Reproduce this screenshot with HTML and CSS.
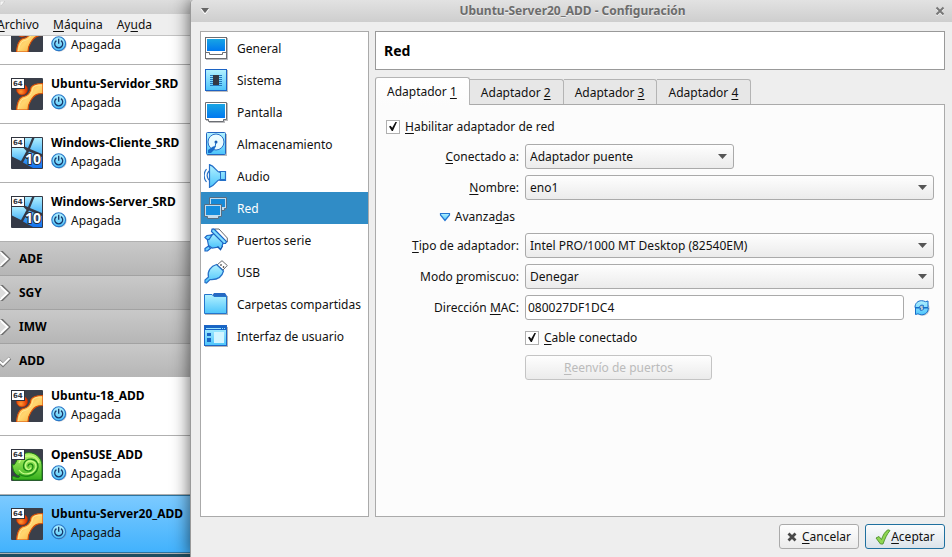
FILE: index.html
```html
<!DOCTYPE html>
<html lang="es">
<head>
<meta charset="utf-8">
<title>Ubuntu-Server20_ADD - Configuración</title>
<link rel="stylesheet" href="styles.css">
</head>
<body>
<svg class="defs" aria-hidden="true">
  <defs>
    <linearGradient id="screen" x1="0" y1="0" x2="0" y2="1"><stop offset="0" stop-color="#18a5e4"/><stop offset="1" stop-color="#0078f0"/></linearGradient>
    <linearGradient id="sky" x1="0" y1="0" x2="0" y2="1"><stop offset="0" stop-color="#b4f2ff"/><stop offset="1" stop-color="#4cc4fb"/></linearGradient>
    <linearGradient id="amber" x1="0" y1="0" x2="1" y2="1"><stop offset="0" stop-color="#ffa024"/><stop offset=".5" stop-color="#ffd670"/><stop offset="1" stop-color="#f9981c"/></linearGradient>
    <radialGradient id="ember" cx=".4" cy=".7"><stop offset="0" stop-color="#ff9a30"/><stop offset="1" stop-color="#e33c05"/></radialGradient>
    <linearGradient id="pane" x1="0" y1="0" x2="0" y2="1"><stop offset="0" stop-color="#aeeeff"/><stop offset="1" stop-color="#4bb4f8"/></linearGradient>
    <linearGradient id="deep" x1="0" y1="0" x2="0" y2="1"><stop offset="0" stop-color="#5cb9fa"/><stop offset="1" stop-color="#1271ee"/></linearGradient>
    <linearGradient id="leaf" x1="0" y1="0" x2="0" y2="1"><stop offset="0" stop-color="#b6f56a"/><stop offset="1" stop-color="#35b01c"/></linearGradient>
  </defs>
  <symbol id="i-badge" viewBox="0 0 32 32">
    <rect x="0.5" y="0.5" width="13" height="10" fill="#fff" stroke="#30343d"/>
    <text class="bits" x="2" y="8">64</text>
  </symbol>
  <symbol id="i-ubuntu-art" viewBox="0 0 32 32">
    <rect width="32" height="32" rx="1" fill="#3a3f4a"/>
    <circle cx="11" cy="11.500" r="5.500" fill="url(#ember)" stroke="#b52e04" stroke-width=".7"/>
    <path d="M32 5.500C27 5.500 22 6 20 9.500C19.500 15 17 18 11 19C7 21 6 26 5.500 32H17C17 28 18 25 20 22C23 17 26 15.500 32 15.500Z" fill="url(#amber)" stroke="#d84c08" stroke-width="1.200"/>
    <path d="M31 7C26 7 23 8 22 10C21 16 18 20 12 21C9 23 8 27 7.500 31" fill="none" stroke="#ffe695" stroke-width="1"/>
  </symbol>
  <symbol id="i-ubuntu" viewBox="0 0 32 32">
    <use href="#i-ubuntu-art"/>
    <use href="#i-badge"/>
  </symbol>
  <symbol id="i-windows" viewBox="0 0 32 32">
    <rect width="32" height="32" rx="1" fill="#343946"/>
    <path d="M12 1H21L17 11L12 9Z" fill="url(#pane)"/>
    <path d="M23.500 1H31V17L19 12Z" fill="url(#pane)"/>
    <path d="M1 10.500H12L15.500 14L10 24L1 19.500Z" fill="url(#pane)"/>
    <path d="M18 14.500L31 20V31H22L12 25.500Z" fill="url(#deep)"/>
    <text class="ten" x="14" y="27">10</text>
    <use href="#i-badge"/>
  </symbol>
  <symbol id="i-suse" viewBox="0 0 32 32">
    <rect width="32" height="32" rx="1" fill="#3a3f4a"/>
    <path d="M1 15C5 19 4 9 12 5C21 1 31 7 31 17V31H2C1 29 1 28 2 27C7 29 8 29 9 27C3 26 2 21 1 15Z" fill="url(#leaf)" stroke="#187d12"/>
    <path d="M8 25C13 29 25 28 27 18C28 9 14 7 12.500 16C12 23 21 24 22 18C22 14 17 14 17 17.500" fill="none" stroke="#1b8914" stroke-width="1.300"/>
    <path d="M8 21C12 27 23 26 25 18C25 11 16 10 14.500 16C14 21 19 22 20 18.500M8 14C11 5 25 4 28 14" fill="none" stroke="#c4fb86" stroke-width="1.300"/>
    <use href="#i-badge"/>
  </symbol>
  <symbol id="i-power" viewBox="0 0 16 16">
    <circle cx="8.500" cy="8.500" r="7.200" fill="#8d9aa5" opacity=".5"/>
    <circle cx="7.700" cy="7.700" r="6.900" fill="url(#sky)" stroke="#2877c8" stroke-width="1.100"/>
    <path d="M5.400 4.600A4 4 0 1 0 10 4.600M7.700 2.800V7.800" fill="none" stroke="#17366a" stroke-width="1.300"/>
  </symbol>
  <symbol id="i-general" viewBox="0 0 24 24">
    <path d="M2 2H24V24H2Z" fill="#bdbdbf"/><rect x="1.500" y="1.500" width="21" height="21" fill="#fff" stroke="#6b6e73"/>
    <rect x="3" y="3" width="18" height="12" fill="url(#screen)"/><path d="M1.500 16.500H5.500V18.500H18.500V16.500H22.500" fill="none" stroke="#6b6e73"/>
  </symbol>
  <symbol id="i-system" viewBox="0 0 24 24">
    <path d="M2 2H24V24H2Z" fill="#bdbdbf"/><rect x="1.500" y="1.500" width="21" height="21" fill="url(#sky)" stroke="#1c63c4"/>
    <path d="M6 7.500H18M6 9.500H18M6 11.500H18M6 13.500H18M6 15.500H18M6 17.500H18" stroke="#2477be"/><rect x="9" y="7" width="6" height="10" fill="#343944"/>
  </symbol>
  <symbol id="i-display" viewBox="0 0 24 24">
    <path d="M2 3H24V21H21V23H5V21H2Z" fill="#bdbdbf"/><path d="M1.500 2.500H22.500V19.500H19.500V21.500H4.500V19.500H1.500Z" fill="#fff" stroke="#6b6e73"/>
    <rect x="3" y="4" width="18" height="14" fill="url(#screen)"/>
  </symbol>
  <symbol id="i-storage" viewBox="0 0 24 24">
    <path d="M3 2H23V24H3Z" fill="#bdbdbf"/><rect x="2.500" y=".5" width="19" height="22" rx="1" fill="url(#sky)" stroke="#2365c0"/>
    <circle cx="12" cy="10" r="8" fill="#e9fbff" stroke="#2871c8"/><circle cx="12" cy="10" r="1.500" fill="#1559ad"/>
    <path d="M4 21V18L9 14.500L12 14L10 18L7 21Z" fill="#176bc8"/><path d="M12 10L11 15" stroke="#176bc8"/>
  </symbol>
  <symbol id="i-audio" viewBox="0 0 24 24">
    <path d="M2.500 5C-.5 9-.5 14 2.500 18M5 7C2.500 10 2.500 13 5 16" fill="none" stroke="#2a72c4" stroke-width="1.200"/>
    <path d="M5.500 .7C11 2 12 8 16 8.500V7.500H21.500V16.500H16V15.500C12 16 11 22 5.500 23.300Z" fill="url(#sky)" stroke="#2470c8" stroke-width="1.200"/><path d="M16.500 8V16M17 15.500H21" stroke="#2470c8"/>
  </symbol>
  <symbol id="i-network" viewBox="0 0 24 24">
    <path d="M5.500 1.500H22.500V12.500H20.500V14.500H8.500V12.500H5.500Z" fill="#c3dced" stroke="#566e83"/><rect x="7" y="3" width="14" height="8" fill="#178ad8"/>
    <path d="M.5 8.500H17.500V20.500H14.500V22.500H3.500V20.500H.5Z" fill="#c3dced" stroke="#566e83"/><rect x="2" y="10" width="14" height="9" fill="#168ddd"/>
  </symbol>
  <symbol id="i-serial" viewBox="0 0 24 24">
    <path d="M11 1H15L23.300 10V14H20L10 4Z" fill="#fff" stroke="#686a6e"/>
    <path d="M3 9.500L12 4.500L19.500 13.500L18 18.500L8 20L4.500 17.500Z" fill="url(#sky)" stroke="#1c65c5" stroke-width="1.200"/>
    <path d="M8 1.200L10 1L22.500 13.500L21.500 15.500L19.500 15.500L7.500 3.500Z" fill="#7fdcff" stroke="#1c65c5" stroke-width="1.200"/>
    <path d="M1 9.500L3 7.500L8 7L5 11.500L2.500 11ZM1 20.500L4.500 18L6.500 20.500L3.500 23H1Z" fill="#6ed2ff" stroke="#1c65c5" stroke-width="1.200"/>
    <path d="M13.500 18.500L16.500 21.500L18.500 18" fill="#7fdcff" stroke="#1559b2" stroke-width="1.500"/>
  </symbol>
  <symbol id="i-usb" viewBox="0 0 24 24">
    <path d="M13 5L18 .7L23.300 5.500L19 10Z" fill="#fff" stroke="#6b6d70"/><path d="M16.500 4.500L17.500 5.500M19 6.500L20 7.500" stroke="#333" stroke-width="1.500"/>
    <path d="M12.500 4.500L19.500 11C18 17 13 20 6 19.500L2.500 23L1 22.500V20L4.500 17C3 11 7 6 12.500 4.500Z" fill="url(#sky)" stroke="#2670c8" stroke-width="1.200"/>
  </symbol>
  <symbol id="i-folder" viewBox="0 0 24 24">
    <path d="M1 4H24V23H1Z" fill="#b4b5b8"/><path d="M8 4L10 1H21L23 4V6H8Z" fill="#2669c2"/><path d="M.5 2.500H8L10 4.500H22.500V21.500H.5Z" fill="url(#sky)" stroke="#2475cc"/>
  </symbol>
  <symbol id="i-interface" viewBox="0 0 24 24">
    <path d="M1 3H24V23H1Z" fill="#b4b5b8"/><rect x=".5" y="1.500" width="22" height="20" fill="url(#sky)" stroke="#1d66c5"/>
    <path d="M1 2H22V6H1ZM3 9H7V12H3ZM3 14H7V18H3Z" fill="#1765c5"/><path d="M2 4.500H17M18 4.500H19M20 4.500H21" stroke="#9be4ff"/><rect x="10" y="8" width="10" height="11" fill="#d3f5ff"/>
  </symbol>
  <symbol id="i-refresh" viewBox="0 0 16 16">
    <circle cx="8.700" cy="8.700" r="7" fill="#9aa5b0" opacity=".6"/>
    <path d="M1 7.500C1 3 4 .7 7.500 .7C9 .7 10.500 1.200 11.500 1.700L14 1V7.500H9L9.500 5.500C7.500 4.500 5.500 5.500 5.500 7.500ZM14.300 8C14.300 12.500 11 14.800 7.700 14.800C6 14.800 5 14.300 4 13.800L1.500 14.500V8H6.500L6 10C8 11 9.500 10 9.800 8Z" fill="url(#sky)" stroke="#176dc9"/>
  </symbol>
</svg>

<div class="desktop">
  <aside class="manager">
    <div class="manager-title"><svg width="5" height="5" viewBox="0 0 5 5" aria-hidden="true"><path d="M0 0H5L1 5H0Z" fill="#f5f5f5" stroke="#b5b5b5" stroke-width=".5"/></svg></div>
    <nav class="menubar">
      <button type="button"><u>A</u>rchivo</button><button type="button"><u>M</u>áquina</button><button type="button">Ay<u>u</u>da</button>
    </nav>
    <div class="machines">
      <div class="machine clipped"><svg class="os" viewBox="0 16 32 16"><use href="#i-ubuntu-art" width="32" height="32"/></svg><span class="state"><svg><use href="#i-power"/></svg>Apagada</span></div>
      <div class="machine"><svg class="os"><use href="#i-ubuntu"/></svg><div><strong>Ubuntu-Servidor_SRD</strong><span class="state"><svg><use href="#i-power"/></svg>Apagada</span></div></div>
      <div class="machine"><svg class="os"><use href="#i-windows"/></svg><div><strong>Windows-Cliente_SRD</strong><span class="state"><svg><use href="#i-power"/></svg>Apagada</span></div></div>
      <div class="machine"><svg class="os"><use href="#i-windows"/></svg><div><strong>Windows-Server_SRD</strong><span class="state"><svg><use href="#i-power"/></svg>Apagada</span></div></div>
      <button type="button" class="group"><svg viewBox="0 0 12 16"><path d="M0 1H2L9 8L2 15H0Z" fill="#ddd"/><path d="M0 2L2 1L9 8L2 15L0 14" fill="none" stroke="#707070" stroke-width="2.500"/><path d="M0 1L7.500 8L0 15" fill="none" stroke="#fff" stroke-width="2"/></svg>ADE</button>
      <button type="button" class="group"><svg viewBox="0 0 12 16"><path d="M0 1H2L9 8L2 15H0Z" fill="#ddd"/><path d="M0 2L2 1L9 8L2 15L0 14" fill="none" stroke="#707070" stroke-width="2.500"/><path d="M0 1L7.500 8L0 15" fill="none" stroke="#fff" stroke-width="2"/></svg>SGY</button>
      <button type="button" class="group"><svg viewBox="0 0 12 16"><path d="M0 1H2L9 8L2 15H0Z" fill="#ddd"/><path d="M0 2L2 1L9 8L2 15L0 14" fill="none" stroke="#707070" stroke-width="2.500"/><path d="M0 1L7.500 8L0 15" fill="none" stroke="#fff" stroke-width="2"/></svg>IMW</button>
      <button type="button" class="group open"><svg viewBox="0 0 12 16"><path d="M-1 8L3 12L10 5" fill="none" stroke="#777" stroke-width="3.500"/><path d="M-1 8L3 11.500L9.500 5" fill="none" stroke="#fff" stroke-width="2.200"/></svg>ADD</button>
      <div class="machine"><svg class="os"><use href="#i-ubuntu"/></svg><div><strong>Ubuntu-18_ADD</strong><span class="state"><svg><use href="#i-power"/></svg>Apagada</span></div></div>
      <div class="machine"><svg class="os"><use href="#i-suse"/></svg><div><strong>OpenSUSE_ADD</strong><span class="state"><svg><use href="#i-power"/></svg>Apagada</span></div></div>
      <div class="machine selected"><svg class="os"><use href="#i-ubuntu"/></svg><div><strong>Ubuntu-Server20_ADD</strong><span class="state"><svg><use href="#i-power"/></svg>Apagada</span></div></div>
    </div>
  </aside>

  <section class="dialog">
    <header class="titlebar">
      <button type="button" aria-label="Menú de ventana"><svg width="10" height="6" viewBox="0 0 10 6"><path d="M1 1L5 6L9 1" fill="none" stroke="#fff"/><path d="M1 0H9L5 5Z" fill="#666"/></svg></button>
      <h1>Ubuntu-Server20_ADD - Configuración</h1>
      <button type="button" aria-label="Cerrar"><svg width="10" height="10" viewBox="0 0 10 10"><path d="M1.500 2.500L8.500 9.500M8.500 2.500L1.500 9.500" stroke="#f4f4f4" stroke-width="2"/><path d="M1.500 1.500L8.500 8.500M8.500 1.500L1.500 8.500" stroke="#777" stroke-width="2"/></svg></button>
    </header>
    <div class="content">
      <nav class="pages">
        <button type="button"><svg><use href="#i-general"/></svg><span>General</span></button>
        <button type="button"><svg><use href="#i-system"/></svg><span>Sistema</span></button>
        <button type="button"><svg><use href="#i-display"/></svg><span>Pantalla</span></button>
        <button type="button"><svg><use href="#i-storage"/></svg><span>Almacenamiento</span></button>
        <button type="button"><svg><use href="#i-audio"/></svg><span>Audio</span></button>
        <button type="button" class="current"><svg><use href="#i-network"/></svg><span>Red</span></button>
        <button type="button"><svg><use href="#i-serial"/></svg><span>Puertos serie</span></button>
        <button type="button"><svg><use href="#i-usb"/></svg><span>USB</span></button>
        <button type="button"><svg><use href="#i-folder"/></svg><span>Carpetas compartidas</span></button>
        <button type="button"><svg><use href="#i-interface"/></svg><span>Interfaz de usuario</span></button>
      </nav>
      <main>
        <h2>Red</h2>
        <div class="tabs" role="tablist">
          <button type="button" role="tab" class="active" aria-selected="true">Adaptador <u>1</u></button><button type="button" role="tab">Adaptador <u>2</u></button><button type="button" role="tab">Adaptador <u>3</u></button><button type="button" role="tab">Adaptador <u>4</u></button>
        </div>
        <form class="panel">
          <div class="check wide"><input type="checkbox" id="enable" checked><label for="enable"><u>H</u>abilitar adaptador de red</label></div>

          <label for="attached"><u>C</u>onectado a:</label>
          <div class="select short"><select id="attached"><option>Adaptador puente</option></select></div>

          <label for="name"><u>N</u>ombre:</label>
          <div class="select"><select id="name"><option>eno1</option></select></div>

          <button type="button" class="advanced"><svg width="12" height="10" viewBox="0 0 12 10"><path d="M1.500 1.500H10.500V3L6 8.500L1.500 3Z" fill="url(#sky)" stroke="#2476d2" stroke-width="1.200"/></svg><span>Avanza<u>d</u>as</span></button>

          <label for="type"><u>T</u>ipo de adaptador:</label>
          <div class="select"><select id="type"><option>Intel PRO/1000 MT Desktop (82540EM)</option></select></div>

          <label for="promiscuous">Modo <u>p</u>romiscuo:</label>
          <div class="select"><select id="promiscuous"><option>Denegar</option></select></div>

          <label for="mac">Dirección <u>M</u>AC:</label>
          <div class="mac"><input type="text" id="mac" value="080027DF1DC4"><button type="button" aria-label="Generar dirección MAC"><svg width="16" height="16"><use href="#i-refresh"/></svg></button></div>

          <div class="check second"><input type="checkbox" id="cable" checked><label for="cable"><u>C</u>able conectado</label></div>
          <button type="button" class="button forward second" disabled><span><u>R</u>eenvío de puertos</span></button>
        </form>
      </main>
    </div>
    <footer>
      <button type="button" class="button"><svg width="10" height="10" viewBox="0 0 10 10"><path d="M1.500 1.500L8.500 8.500M8.500 1.500L1.500 8.500" stroke="#484848" stroke-width="2.800"/></svg><span><u>C</u>ancelar</span></button>
      <button type="button" class="button primary"><svg width="16" height="16" viewBox="0 0 16 16"><path d="M1 9L4 7.500L6.500 10.500C8 6 10 2.500 13 .8L15 1.500C12 5 10 9.500 8 15H5.500Z" fill="#8ed652" stroke="#4c8e2d" stroke-width=".9"/></svg><span><u>A</u>ceptar</span></button>
    </footer>
  </section>
</div>
</body>
</html>
```
FILE: styles.css
```css
* { box-sizing: border-box; }

body {
  margin: 0;
  background: #eee;
  color: #111;
  font: 12px/18px "Noto Sans", sans-serif;
}

button, input, select {
  margin: 0;
  padding: 0;
  border: 0;
  background: none;
  color: inherit;
  font: inherit;
}

svg { display: block; flex: none; }
u { text-underline-offset: 2px; text-decoration-thickness: 1px; text-decoration-skip-ink: none; }

.defs { position: absolute; width: 0; height: 0; }
.bits { font: bold 7px "DejaVu Sans", sans-serif; fill: #30343d; }
.ten { font: bold 14px "Noto Sans", sans-serif; fill: #fff; stroke: #262b38; stroke-width: 2px; paint-order: stroke; }

.desktop { display: flex; min-height: 100vh; }

/* Machine manager window, behind the dialog */
.manager {
  width: 190px;
  flex: none;
  overflow: hidden;
  background: #1f4d60;
}
.manager-title {
  height: 14px;
  padding-top: 1px;
  background: linear-gradient(#dedede, #cfcfcf);
}
.menubar {
  display: flex;
  gap: 14px;
  height: 22px;
  margin-left: -3px;
  background: #eee;
  border-bottom: 1px solid #c4c4c4;
}
.machines { background: #fff; border-bottom: 1px solid #b0b0b0; }
.machine {
  display: flex;
  align-items: center;
  gap: 8px;
  height: 59px;
  padding-left: 11px;
  border-bottom: 1px solid #b0b0b0;
  white-space: nowrap;
}
.machine strong { display: block; color: #000; }
.os { width: 32px; height: 32px; }
.state { display: flex; align-items: center; gap: 4px; line-height: 20px; }
.state svg { width: 16px; height: 16px; margin-bottom: 2px; }
.machine.clipped { height: 29px; align-items: flex-start; }
.clipped .os { height: 16px; }
.clipped .state { line-height: 18px; }
.machine.selected {
  height: 58px;
  background: linear-gradient(#7ccaff, #42b2fd);
  border-top: 1px solid #2b739f;
  border-bottom-color: #2b739f;
}
.group {
  display: flex;
  align-items: center;
  gap: 7px;
  width: 100%;
  height: 34px;
  background: linear-gradient(#c9c9c9, #b6b6b6);
  border-bottom: 1px solid #a2a2a2;
  color: #000;
  font-weight: bold;
}
.group.open { height: 33px; border-bottom: 0; }
.group svg { width: 12px; height: 16px; }

/* Settings dialog */
.dialog {
  position: relative;
  display: flex;
  flex: 1;
  flex-direction: column;
  min-width: 0;
  background: #eee;
  border-left: 1px solid #999;
  border-top-left-radius: 4px;
  box-shadow: 0 0 18px rgba(0, 0, 0, .65);
}
.titlebar {
  display: flex;
  align-items: center;
  height: 22px;
  padding: 0 7px 0 9px;
  background: linear-gradient(#e2e2e2, #cecece);
  border-top-left-radius: 4px;
}
.titlebar h1 {
  flex: 1;
  margin: 0;
  color: #6c6c6c;
  font-size: 12px;
  line-height: 24px;
  text-align: center;
  text-shadow: 0 1px #eee;
}
.content { display: flex; flex: 1; gap: 6px; padding: 9px 7px 0 9px; }
.pages {
  width: 169px;
  flex: none;
  background: #fff;
  border: 1px solid #aaa;
}
.pages button {
  display: flex;
  align-items: center;
  gap: 9px;
  width: 100%;
  height: 32px;
  padding-left: 3px;
  white-space: nowrap;
}
.pages svg { width: 24px; height: 24px; }
.pages span { padding-top: 2px; }
.pages .current { background: #308cc6; color: #fff; }

main { display: flex; flex: 1; flex-direction: column; min-width: 0; }
h2 {
  margin: 0 0 7px;
  padding: 1px 8px 0;
  background: #fff;
  border: 1px solid #999;
  color: #000;
  font-size: 14px;
  line-height: 36px;
}
.tabs { display: flex; align-items: flex-end; height: 27px; }
.tabs button {
  height: 25px;
  padding: 2px 12px 0 11px;
  background: #e7e7e7;
  border: 1px solid #b4b4b4;
  border-left: 0;
  border-bottom: 0;
  border-top-right-radius: 3px;
}
.tabs .active {
  position: relative;
  height: 28px;
  margin-bottom: -1px;
  padding-top: 0;
  background: linear-gradient(#fff, #fcfcfc);
  border-left: 1px solid #aaa;
  border-radius: 3px 3px 0 0;
}
.panel {
  display: grid;
  flex: 1;
  grid-template-columns: 133px 1fr;
  align-content: start;
  align-items: center;
  gap: 6px;
  padding: 10px;
  background: #fcfcfc;
  border: 1px solid #aaa;
}
.panel > label { text-align: right; }
.wide { grid-column: 1 / -1; }
.second { grid-column: 2; }
.check { display: flex; align-items: center; gap: 5px; height: 23px; }
.check input {
  display: grid;
  place-items: center;
  width: 14px;
  height: 14px;
  appearance: none;
  background: #fff;
  border: 1px solid #b0b0b0;
}
.check input:checked::before {
  content: "";
  width: 8px;
  height: 9px;
  background: #111;
  clip-path: polygon(0 50%, 20% 42%, 40% 65%, 80% 0, 100% 0, 48% 100%, 35% 100%);
}
.select { position: relative; }
.select.short { width: 209px; }
.select::after {
  content: "";
  position: absolute;
  top: 10px;
  right: 7px;
  width: 9px;
  height: 5px;
  background: #555;
  clip-path: polygon(0 0, 100% 0, 50% 100%);
  pointer-events: none;
}
.select select, .button {
  height: 25px;
  background: linear-gradient(#fefefe, #ebebeb);
  border: 1px solid #aaa;
  border-radius: 3px;
}
.select select { display: block; width: 100%; padding: 0 4px; appearance: none; }
.advanced {
  display: flex;
  align-items: center;
  justify-content: flex-end;
  gap: 4px;
  height: 21px;
  padding-right: 4px;
}
.advanced + label { grid-column: 1; }
.mac { display: flex; gap: 5px; }
.mac input {
  flex: 1;
  min-width: 0;
  height: 25px;
  padding: 0 2px;
  background: #fff;
  border: 1px solid #aaa;
  border-radius: 3px;
}
.mac button { display: grid; place-items: center; width: 25px; height: 25px; }
.button { display: flex; align-items: center; justify-content: center; }
.forward { width: 187px; border-color: #c4c4c4; color: #bbb; }

footer { display: flex; justify-content: flex-end; gap: 6px; padding: 7px 7px 8px; }
footer .button { width: 80px; gap: 5px; }
footer .primary { gap: 0; border-color: #1f709f; background: linear-gradient(#fbfcfd, #dbe3ea); }
```
